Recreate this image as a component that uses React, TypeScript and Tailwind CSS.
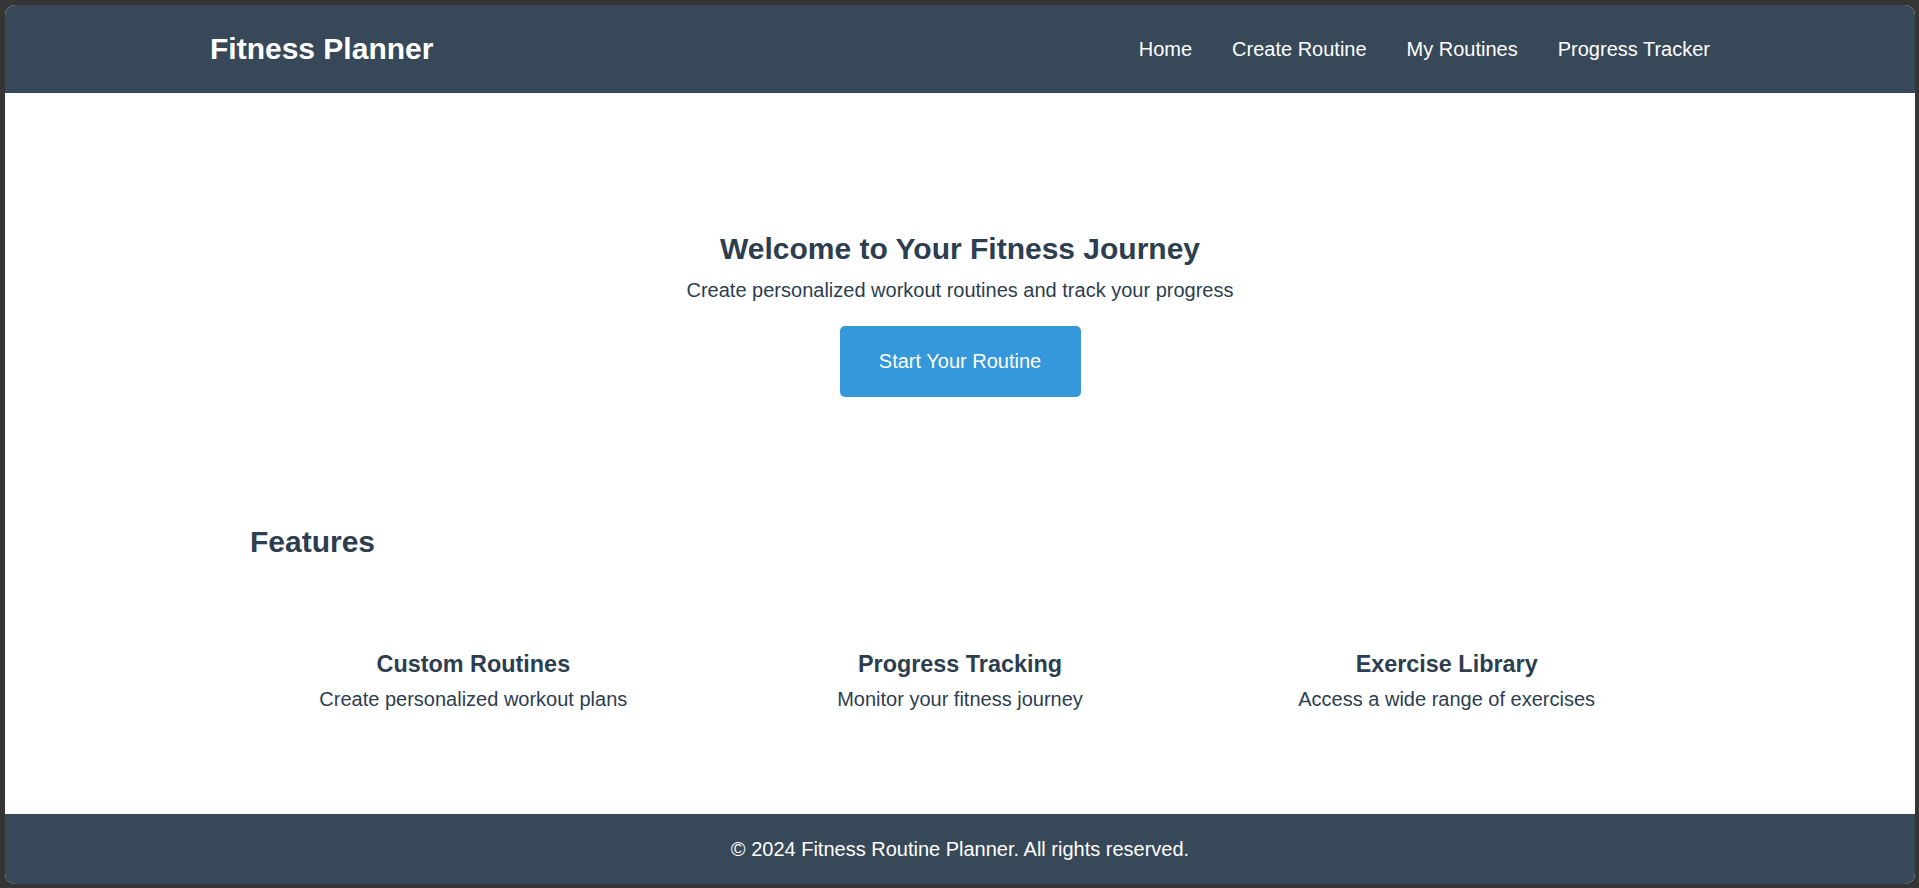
import React from "react";

export default function App() {
  const features = [
    { title: "Custom Routines", desc: "Create personalized workout plans" },
    { title: "Progress Tracking", desc: "Monitor your fitness journey" },
    { title: "Exercise Library", desc: "Access a wide range of exercises" },
  ];
  return (
    <div
      className="w-[1919px] h-[888px] bg-[#353535] pt-[5px] pl-[5px] pr-[4px] pb-[4px]"
      style={{ fontFamily: '"Liberation Sans", Arial, sans-serif' }}
    >
      <div className="w-full h-full bg-white rounded-[10px] overflow-hidden flex flex-col text-[#2c3e50]">
        <header className="h-[88px] bg-[#374859] shrink-0 flex items-center">
          <div className="w-[1500px] mx-auto flex items-center justify-between">
            <h1 className="text-[30px] font-bold text-white leading-[34px]">Fitness Planner</h1>
            <nav className="flex items-center gap-[40px] text-[20px] text-white leading-[23px]">
              <span>Home</span>
              <span>Create Routine</span>
              <span>My Routines</span>
              <span>Progress Tracker</span>
            </nav>
          </div>
        </header>
        <main className="flex-1 flex flex-col">
          <section className="flex flex-col items-center pt-[139px]">
            <h2 className="text-[30px] font-bold leading-[34.5px]">Welcome to Your Fitness Journey</h2>
            <p className="text-[20px] leading-[23px] mt-[12px]">
              Create personalized workout routines and track your progress
            </p>
            <button className="mt-[24px] w-[241px] h-[71px] bg-[#3498db] text-white text-[20px] rounded-[5px] flex items-center justify-center">
              Start Your Routine
            </button>
          </section>
          <section className="w-[1500px] mx-auto px-[40px] mt-[128px]">
            <h2 className="text-[30px] font-bold leading-[34.5px]">Features</h2>
            <div className="grid grid-cols-3 gap-[40px] mt-[92px]">
              {features.map((f) => (
                <div key={f.title} className="flex flex-col items-center text-center">
                  <h3 className="text-[23.4px] font-bold leading-[27px]">{f.title}</h3>
                  <p className="text-[20px] leading-[23px] mt-[10px]">{f.desc}</p>
                </div>
              ))}
            </div>
          </section>
        </main>
        <footer className="h-[70px] bg-[#374859] shrink-0 flex items-center justify-center text-white text-[20px]">
          © 2024 Fitness Routine Planner. All rights reserved.
        </footer>
      </div>
    </div>
  );
}
